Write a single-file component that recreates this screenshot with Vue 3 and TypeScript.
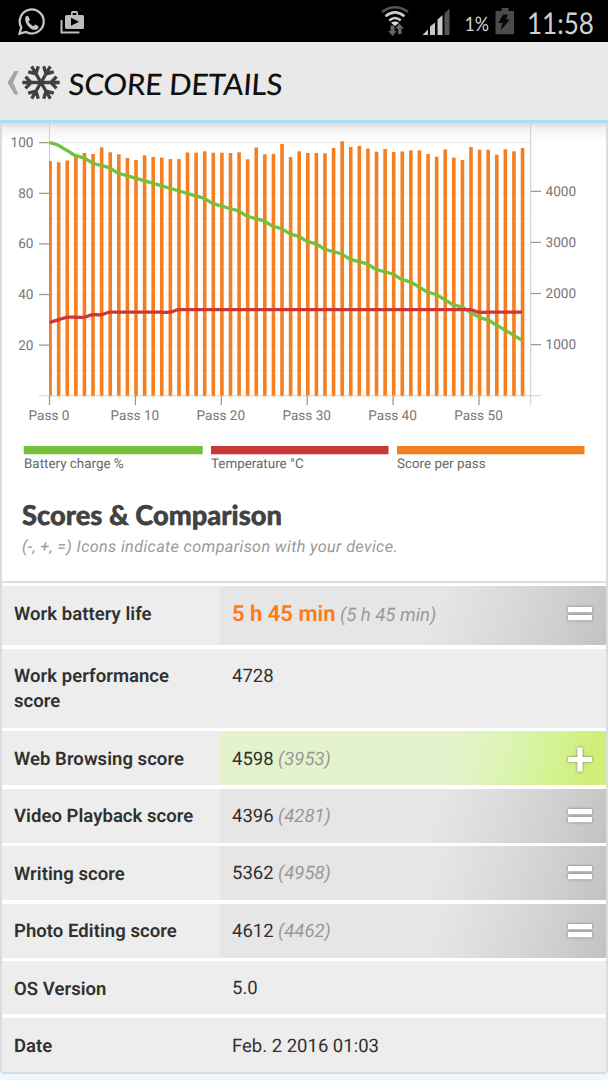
<script setup lang="ts">
interface Row {
  label: string
  value: string
  compare?: string
  kind?: 'equal' | 'plus'
  strong?: boolean
}

const rows: Row[] = [
  { label: 'Work battery life', value: '5 h 45 min', compare: '(5 h 45 min)', kind: 'equal', strong: true },
  { label: 'Work performance score', value: '4728' },
  { label: 'Web Browsing score', value: '4598', compare: '(3953)', kind: 'plus' },
  { label: 'Video Playback score', value: '4396', compare: '(4281)', kind: 'equal' },
  { label: 'Writing score', value: '5362', compare: '(4958)', kind: 'equal' },
  { label: 'Photo Editing score', value: '4612', compare: '(4462)', kind: 'equal' },
  { label: 'OS Version', value: '5.0' },
  { label: 'Date', value: 'Feb. 2 2016 01:03' },
]

const base = 272.7
const x = (i: number) => 49.5 + i * 8.59
const y = (v: number) => base - v * 2.53

const barTops = [
  38, 39.3, 37.5, 33.5, 30, 31, 24.3, 29.3, 31.3, 35, 37, 32.3, 34, 34.7, 36, 36, 29.5, 29.7, 28.3, 29.7,
  29.7, 30, 29.3, 36.3, 24.5, 31.3, 30.8, 21, 34, 28.3, 30, 30, 30.3, 25, 18.3, 24, 23, 25.5, 28.7, 26,
  29, 28.5, 27.3, 27.3, 31, 33.7, 26.3, 34.7, 37, 24, 26.7, 26.7, 31.7, 26.3, 28.3, 25,
]
const charge = [
  100, 99, 97, 95, 94, 92, 91, 90, 88, 87, 86, 85, 84, 83, 82, 81, 80, 79, 78, 76, 75, 74, 73, 71, 70, 69, 67,
  66, 64, 63, 61, 60, 58, 57, 56, 54, 53, 52, 50, 49, 48, 46, 45, 43, 41, 40, 38, 36, 35, 33, 31, 30, 28, 26, 24, 22,
]
const temperature = charge.map((_, i) =>
  i < 1 ? 29 : i < 2 ? 30 : i < 5 ? 31 : i < 7 ? 32 : i < 15 ? 33 : i < 50 ? 34 : 33,
)

function curve(values: number[]): string {
  return values
    .map((v, i) => {
      if (i === 0) return `M${x(0)} ${y(v)}`
      const p = values[i - 1]
      const before = values[Math.max(0, i - 2)]
      const after = values[Math.min(values.length - 1, i + 1)]
      const s1 = (v - before) / 7
      const s2 = (after - p) / 7
      return `C${x(i - 1) + 2.9} ${y(p + s1)} ${x(i) - 2.9} ${y(v - s2)} ${x(i)} ${y(v)}`
    })
    .join(' ')
}

const leftTicks = [20, 40, 60, 80, 100]
const rightTicks = [1000, 2000, 3000, 4000]
const passes = [0, 10, 20, 30, 40, 50]
const grid = [10, 20, 30, 40, 50, 60, 70, 80, 90]
const arms = [0, 60, 120, 180, 240, 300]
</script>

<template>
  <div class="screen">
    <header class="status">
      <svg class="status-art" width="608" height="42" viewBox="0 0 608 42">
        <g fill="none" stroke="#c4c4c4" stroke-width="2.3">
          <path d="M19.500 33.700 21.300 27.400A12 12 0 1 1 26 32Z" />
        </g>
        <path fill="#c4c4c4" d="M25.500 17q1.400-2 2.800-.8l1.700 3.500-1.500 2q1.500 3.200 4.900 4.600l1.900-1.800 3.100 1.700q.6 2.700-2.700 3.600-3.700.6-7.700-3.900-4-4.500-2.500-8.900Z" />
        <path fill="none" stroke="#bdbdbd" stroke-width="2" d="M61.500 20V32.500H79.500" />
        <path fill="#bdbdbd" fill-rule="evenodd" d="M67 15h4v-2.300q0-1.700 1.700-1.700h3.600q1.700 0 1.700 1.700V15h4.500q1.500 0 1.500 1.500v11q0 1.500-1.500 1.500H67q-2 0-2-1.500v-11q0-1.500 2-1.500Zm5.700 0h3.600v-2h-3.600ZM71 17.800v8l8-4Z" />
        <g fill="none" stroke-width="2.500">
          <path stroke="#555" d="M382 12Q395 2.500 408 12" />
          <path stroke="#ccc" d="M385.500 16.200Q395 8.500 404.500 16.200M389.300 20.500Q395 15.500 400.700 20.500" />
        </g>
        <path fill="#ddd" d="M391 22.800Q395 20 399 22.800L395 26Z" />
        <path fill="#666" d="M390.500 25.500h4V31h2.300l-4.300 5-4.300-5h2.300ZM398 34h3.500v-5.500h2.300l-4.300-5-4.300 5H398Z" />
        <path fill="#c8c8c8" d="M422.500 35 428 29.500V35ZM430 35V26.500l5-4V35ZM437.500 35V19.500l5-4.500V35Z" />
        <path fill="#555" d="M444.500 35V13.500l5-5V35Z" />
        <path fill="#4b4b4b" d="M495.500 11h6V8h7v3h5.500v23.300h-18.500Z" />
        <path fill="#090909" d="m503 14.500 5 0-2 5h4l-9.500 11 2-7.500h-4.300Z" />
        <text x="464.500" y="31" class="battery" textLength="24.500" lengthAdjust="spacingAndGlyphs">1%</text>
        <text x="527" y="33.500" class="clock" textLength="67" lengthAdjust="spacingAndGlyphs">11:58</text>
      </svg>
    </header>

    <div class="actionbar">
      <svg width="608" height="78" viewBox="0 42 608 78">
        <path fill="#a5a5a5" d="M14.500 71h4L13 82.500 18.500 94.500h-4L7.500 82.500Z" />
        <g fill="none" stroke="#3f4143" stroke-width="3.300">
          <g v-for="a in arms" :key="a" :transform="`translate(41 82.500) rotate(${a})`">
            <path d="M0 0H18.700M10 0 15.500-5.800M10 0 15.500 5.800" />
          </g>
        </g>
        <text x="74.500" y="95" class="heading" transform="skewX(-4)" textLength="214" lengthAdjust="spacing">SCORE DETAILS</text>
      </svg>
    </div>

    <main class="card">
      <svg class="chart" width="604" height="360" viewBox="2 0 604 360">
        <defs>
          <linearGradient id="shade" x1="0" y1="0" x2="0" y2="1">
            <stop offset="0" stop-color="#dcdcdc" />
            <stop offset=".35" stop-color="#f4f4f4" />
            <stop offset="1" stop-color="#fff" />
          </linearGradient>
          <clipPath id="plot"><rect x="49" y="0" width="482" height="274" /></clipPath>
        </defs>
        <rect x="2" y="0" width="604" height="20" fill="url(#shade)" />
        <path d="M50 19.500H530" stroke="#e8e8e8" />
        <path v-for="g in grid" :key="g" :d="`M50 ${y(g)}H530`" stroke="#ededed" stroke-dasharray="4 1" />
        <path d="M49.500 0V273M530.700 0V282" stroke="#ccc" fill="none" />
        <g clip-path="url(#plot)" fill="#f57f20">
          <rect v-for="(t, i) in barTops" :key="i" :x="x(i) - 1.200" :y="t" width="3.600" :height="base - t + 0.600" />
        </g>
        <path d="M39 272.700H541" stroke="#c9c9c9" stroke-opacity=".8" />
        <path :d="curve(charge)" fill="none" stroke="#76c13c" stroke-width="3.300" />
        <path :d="curve(temperature)" fill="none" stroke="#cb3838" stroke-width="3.300" />
        <g class="axis">
          <template v-for="t in leftTicks" :key="t">
            <path :d="`M39 ${y(t)}H49`" stroke="#999" stroke-width="1.300" />
            <text x="33.500" :y="y(t) + 4.500" text-anchor="end">{{ t }}</text>
          </template>
          <template v-for="t in rightTicks" :key="t">
            <path :d="`M531 ${base - t * 0.0511}H541`" stroke="#999" stroke-width="1.300" />
            <text x="545.500" :y="base - t * 0.0511 + 4.500">{{ t }}</text>
          </template>
          <template v-for="p in passes" :key="p">
            <path :d="`M${x(p)} 273V282`" stroke="#999" stroke-width="1.300" />
            <text :x="x(p) - 0.500" y="297" text-anchor="middle">Pass {{ p }}</text>
          </template>
        </g>
        <g class="legend">
          <rect x="23.700" y="323" width="179" height="8.300" fill="#76c13c" />
          <rect x="211" y="323" width="177.500" height="8.300" fill="#cb3838" />
          <rect x="397" y="323" width="187.500" height="8.300" fill="#f38020" />
          <text x="24" y="345">Battery charge %</text>
          <text x="211" y="345">Temperature °C</text>
          <text x="397" y="345">Score per pass</text>
        </g>
      </svg>

      <section class="intro">
        <h2>Scores &amp; Comparison</h2>
        <p>(-, +, =) Icons indicate comparison with your device.</p>
      </section>

      <div class="table">
        <div v-for="row in rows" :key="row.label" class="row">
          <div class="label">{{ row.label }}</div>
          <div class="value" :class="[row.kind, { strong: row.strong }]">
            <span class="number">{{ row.value }}</span>
            <em v-if="row.compare">{{ row.compare }}</em>
            <svg v-if="row.kind" class="mark" width="32" height="32" viewBox="0 0 32 32">
              <path v-if="row.kind === 'equal'" d="M4 9h24v5.300H4ZM4 17h24v5.300H4Z" />
              <path v-else d="M13.300 4.500h5.200v9.500H28v5h-9.500v9.500h-5.200V19H4v-5h9.300Z" />
            </svg>
          </div>
        </div>
      </div>
    </main>
  </div>
</template>

<style>
body {
  margin: 0;
  background: #eef7fe;
}
</style>

<style scoped>
.screen {
  width: 608px;
  height: 1080px;
  overflow: hidden;
  background: #eef7fe;
  font-family: Roboto, sans-serif;
  text-rendering: geometricPrecision;
}
svg {
  display: block;
}
.status {
  height: 42px;
  background: #000;
}
.battery,
.clock {
  font-family: Lato, sans-serif;
  font-weight: 400;
  fill: #d0d0d0;
}
.battery {
  font-size: 20px;
}
.clock {
  font-size: 30px;
}
.actionbar {
  box-sizing: border-box;
  height: 81px;
  background: #e9e9e9;
  border-bottom: 3px solid #a5e0fa;
}
.heading {
  font-family: Lato, sans-serif;
  font-size: 29.5px;
  font-weight: 500;
  fill: #111;
}
.card {
  box-sizing: border-box;
  height: 951px;
  background: #fff;
  border: 2px solid #dcdcdc;
  border-top: 0;
  border-radius: 0 0 4px 4px;
  overflow: hidden;
}
.axis text {
  font-size: 13.6px;
  fill: #777;
}
.legend text {
  font-size: 13.4px;
  fill: #666;
}
.intro {
  box-sizing: border-box;
  height: 100px;
  padding: 14px 20px 0;
  border-bottom: 2px solid #dcdcdc;
}
h2 {
  margin: 0;
  font: 900 27.3px/36px "Lato Black", Lato, sans-serif;
  -webkit-text-stroke: 0.5px #414141;
  color: #414141;
}
p {
  margin: 1px 0 0;
  font-size: 16.2px;
  line-height: 26px;
  font-style: italic;
  color: #999;
  letter-spacing: 0.37px;
}
.table {
  display: grid;
  grid-template-rows: 63px 82px 58px 57px 58px 57px 57px 54px;
  padding-top: 3px;
}
.row {
  display: grid;
  grid-template-columns: 218px 1fr;
  box-sizing: border-box;
  border-bottom: 4px solid #fff;
  background: #ededed;
  font-size: 18.5px;
  line-height: 25px;
  color: #303030;
}
.row:nth-child(2),
.row:nth-child(4),
.row:nth-child(6) {
  border-bottom-width: 3px;
}
.row:last-child {
  border-bottom: 0;
}
.label {
  padding: 16px 12px 0;
  font-weight: 600;
  letter-spacing: 0.05px;
}
.row:nth-child(2) .label,
.row:nth-child(4) .label,
.row:nth-child(6) .label {
  padding-top: 15px;
}
.value {
  position: relative;
  padding: 15px 12px 0;
}
.row:nth-child(8) .value {
  padding-top: 16px;
}
.value.equal {
  background: linear-gradient(108deg, #e6e6e6 55%, #dbdbdb 71%, #d0d0d0 85%, #c3c2c0 100%);
}
.value.plus {
  padding-top: 16px;
  background: linear-gradient(106deg, #e4f3cc 60%, #dbf4ae 75%, #cef077 95%);
}
.number {
  margin-right: 4.5px;
}
.strong .number {
  font-size: 22px;
  font-weight: 600;
  color: #ff7a12;
}
.value.strong {
  padding-top: 16px;
}
em {
  color: #999;
}
.mark {
  position: absolute;
  right: 10px;
  top: 11px;
  fill: #fff;
  filter: drop-shadow(0 0 1.5px #777);
}
.plus .mark,
.strong .mark {
  top: 12px;
}
</style>
